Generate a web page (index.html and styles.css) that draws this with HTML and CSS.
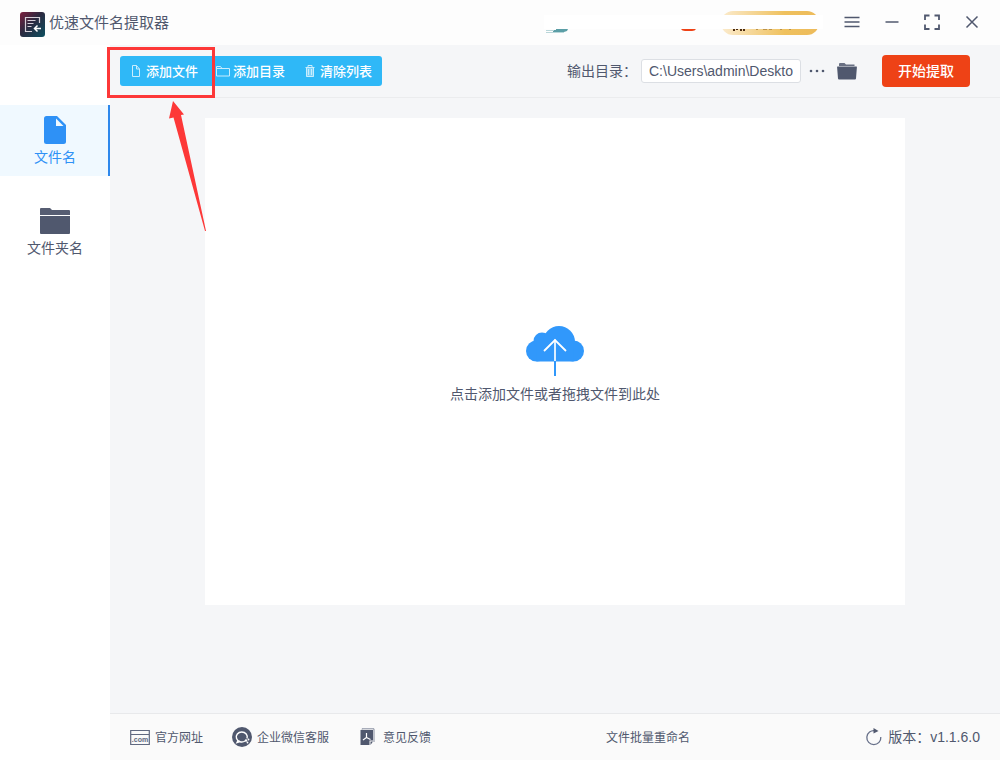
FILE: index.html
```html
<!DOCTYPE html>
<html lang="zh-CN">
<head>
<meta charset="utf-8">
<title>优速文件名提取器</title>
<link rel="stylesheet" href="styles.css">
</head>
<body>
<div class="app">
  <header class="titlebar">
    <svg class="logo" width="25" height="25" viewBox="0 0 25 25" aria-hidden="true">
      <defs>
        <linearGradient id="logo-fill" x1="0" y1="0" x2="1" y2="1">
          <stop offset="0" stop-color="#7d1f3d"/><stop offset=".45" stop-color="#2b2940"/><stop offset="1" stop-color="#0d5060"/>
        </linearGradient>
      </defs>
      <rect width="25" height="25" rx="3" fill="url(#logo-fill)"/>
      <path d="M19.500 11V5.500h-14v14H12M7.500 8.500h8M7.500 11.500h6M7.500 14.500h4" fill="none" stroke="#d5cfd8" stroke-width="1.200"/>
      <path d="M21 16.500h-6M17.500 13.500l-3 3 3 3" fill="none" stroke="#fff" stroke-width="1.500"/>
    </svg>
    <h1 class="title">优速文件名提取器</h1>
    <svg class="account" width="280" height="28" viewBox="0 0 280 28" aria-hidden="true">
      <defs>
        <linearGradient id="gold" x1="0" x2="1">
          <stop offset="0" stop-color="#fbebcd"/><stop offset=".65" stop-color="#efc15e"/><stop offset="1" stop-color="#edbb5b"/>
        </linearGradient>
      </defs>
      <path d="M12 20h12l-1 2-3 1H9v-2h3z" fill="#5b9ea6"/>
      <path d="M2 21h8v1H2zM2 23h18v1H2z" fill="#b9d6d9"/>
      <path d="M137 20h15q-1 2-4 2h-7q-3 0-4-2z" fill="#ee4216"/>
      <rect x="177" y="2" width="98" height="24" rx="12" fill="url(#gold)"/>
      <path d="M189 20h2v2h-2zM196 20h2v2h-2zM199 20h2v2h-2zM192 20h2v1h-2z" fill="#4b2b12"/>
      <path d="M212 20h2v1h-2zM219 20h4v1h-4zM225 20h3v1h-3zM236 20h2v1h-2zM245 20h2v1h-2z" fill="#bd9349"/>
      <path d="M0 6h279v14H0z" fill="#fff"/>
    </svg>
    <nav class="window-controls" aria-label="窗口">
      <button class="win-btn" type="button" aria-label="菜单"><svg width="18" height="18" viewBox="0 0 18 18"><path d="M1.500 3.500h15M1.500 8h15M1.500 12.500h15" stroke-width="1.500"/></svg></button>
      <button class="win-btn" type="button" aria-label="最小化"><svg width="18" height="18" viewBox="0 0 18 18"><path d="M2.500 8h13" stroke-width="1.500"/></svg></button>
      <button class="win-btn" type="button" aria-label="最大化"><svg width="18" height="18" viewBox="0 0 18 18"><path d="M2 6V1.500h4.500M11.500 1.500H16V6M16 10.500V15h-4.500M6.500 15H2v-4.500" stroke-width="1.800"/></svg></button>
      <button class="win-btn" type="button" aria-label="关闭"><svg width="18" height="18" viewBox="0 0 18 18"><path d="M3.500 2.500l11 11M14.500 2.500l-11 11" stroke-width="1.500"/></svg></button>
    </nav>
  </header>

  <div class="body">
    <nav class="sidebar">
      <button class="side-item active" type="button">
        <svg width="30" height="30" viewBox="0 0 30 30" aria-hidden="true"><path d="M6.500 1H17l9 9v16.500q0 2.500-2.500 2.500h-17Q4 29 4 26.500V3.500Q4 1 6.500 1z" fill="#2e91f6"/><path d="M16 3.500V11h7.500z" fill="#f0f9ff"/></svg>
        <span>文件名</span>
      </button>
      <button class="side-item" type="button">
        <svg width="30" height="30" viewBox="0 0 30 30" aria-hidden="true"><path d="M1 2h9l2 2h17q1 0 1 1v4H0V3q0-1 1-1z" fill="#565d72"/><path d="M0 10h30v17q0 1-1 1H1q-1 0-1-1z" fill="#50586e"/></svg>
        <span>文件夹名</span>
      </button>
    </nav>

    <main class="main">
      <div class="toolbar">
        <div class="actions">
          <button class="action" type="button">
            <svg width="14" height="14" viewBox="0 0 14 14" aria-hidden="true"><path d="M3.500 1.500h4l3 3.500v7.500h-7zM7.500 1.500V5h3"/></svg><span>添加文件</span>
          </button>
          <button class="action" type="button">
            <svg width="14" height="14" viewBox="0 0 14 14" aria-hidden="true"><path d="M.500 12V2.500h4l1.500 2h7.500V12zM.500 4.500H6"/></svg><span>添加目录</span>
          </button>
          <button class="action" type="button">
            <svg width="14" height="14" viewBox="0 0 14 14" aria-hidden="true"><path d="M3.500 4.500h7v8h-7z" opacity=".5" class="bin"/><path d="M2.500 3.500h9M5 3V1.500h4V3M3.500 4v8.500h7V4M5.500 5v6M8.500 5v6"/></svg><span>清除列表</span>
          </button>
        </div>
        <div class="output">
          <label class="output-label" for="out">输出目录：</label>
          <input class="output-path" id="out" type="text" value="C:\Users\admin\Deskto">
          <button class="icon-btn more" type="button" aria-label="更多"><svg width="16" height="20" viewBox="0 0 16 20"><circle cx="2" cy="10" r="1.300"/><circle cx="8" cy="10" r="1.300"/><circle cx="14" cy="10" r="1.300"/></svg></button>
          <button class="icon-btn folder" type="button" aria-label="打开目录"><svg width="20" height="20" viewBox="0 0 20 20"><path d="M2 5V3q0-1 1-1h4.500L9 3.500h8.500V5z" opacity=".85"/><path d="M.500 5.500h19q.500 0 .400.800L19 17.500q-.100 1-1 1H2q-.900 0-1-1L.100 6.300Q0 5.500.500 5.500z"/></svg></button>
          <button class="start" type="button">开始提取</button>
        </div>
      </div>

      <section class="workspace">
        <button class="dropzone" type="button">
          <svg width="58" height="52" viewBox="0 0 58 52" aria-hidden="true">
            <g fill="#3198fb">
              <circle cx="10.500" cy="26" r="10.500"/>
              <circle cx="16" cy="16" r="8.500"/>
              <circle cx="33" cy="17" r="16"/>
              <circle cx="47.500" cy="26" r="10.500"/>
              <path d="M10.500 16h37v20.500h-37zM28 36h2v15h-2z"/>
            </g>
            <path d="M29 14.500V36" stroke="#dceeff" stroke-width="2"/>
            <path d="M18 26l11-11 11 11" fill="none" stroke="#fff" stroke-width="1.800"/>
          </svg>
          <span>点击添加文件或者拖拽文件到此处</span>
        </button>
      </section>

      <footer class="footer">
        <div class="links">
          <a class="link" href="#">
            <svg width="20" height="20" viewBox="0 0 20 20" aria-hidden="true"><path d="M.700 3.500h18.600v14H.700zM1 7.500h18" fill="none" stroke="#606980" stroke-width="1.200"/><text class="com" x="10" y="15">.com</text></svg>
            <span>官方网址</span>
          </a>
          <a class="link" href="#">
            <svg width="20" height="20" viewBox="0 0 20 20" aria-hidden="true"><circle cx="10" cy="10" r="10" fill="#50586e"/><path d="M13 14a5.500 5 0 1 1 2-2.500M6 13.500L5 15.500l3-1" fill="none" stroke="#fff" stroke-width="1.400"/><circle cx="14" cy="13.500" r="1.200" fill="#fff"/><circle cx="16.500" cy="12.500" r=".900" fill="#fff"/><circle cx="15.500" cy="15.500" r=".900" fill="#fff"/></svg>
            <span>企业微信客服</span>
          </a>
          <a class="link" href="#">
            <svg width="20" height="20" viewBox="-2 0 20 20" aria-hidden="true"><path d="M2 2.500V1.800h12V15" fill="none" stroke="#858c9e" stroke-width="1"/><path d="M.500 3h12.500v10.500H9.500V18h-9z" fill="#50586e"/><path d="M10.500 14.500H13L10.500 18z" fill="#50586e"/><path d="M6.500 6v4.500L3 13M6.500 10.500l4 2" fill="none" stroke="#fff" stroke-width="1.200"/></svg>
            <span>意见反馈</span>
          </a>
        </div>
        <a class="rename" href="#">文件批量重命名</a>
        <div class="version">
          <svg width="18" height="18" viewBox="0 0 18 18" aria-hidden="true"><path d="M10 2.700A7 7 0 1 0 15.800 9" fill="none" stroke="#68718a" stroke-width="1.300"/><path d="M8.500 0l5 3-5 2.500z" fill="#50586e"/></svg>
          <span>版本：v1.1.6.0</span>
        </div>
      </footer>
    </main>
  </div>

  <svg class="callout" width="108" height="185" viewBox="0 0 108 185" aria-hidden="true">
    <path d="M1.500 1.500h105v48H1.500z" fill="none" stroke="#fd3838" stroke-width="3"/>
    <path d="M66 54l11 13.500-3 .500L99 184h-1L66.500 70.500l-4.500 1z" fill="#fd3838"/>
  </svg>
</div>
</body>
</html>
```
FILE: styles.css
```css
* { box-sizing: border-box; }

body {
  margin: 0;
  font-family: "Liberation Sans", "Noto Sans CJK SC", sans-serif;
  font-size: 14px;
  color: #50586e;
}

button, input {
  margin: 0;
  padding: 0;
  border: 0;
  background: none;
  font: inherit;
  color: inherit;
}

button { cursor: pointer; }
a { color: inherit; text-decoration: none; }
svg { display: block; flex: none; }

.app {
  position: relative;
  display: flex;
  flex-direction: column;
  min-height: 100vh;
}

.titlebar {
  display: flex;
  align-items: center;
  height: 45px;
  padding: 0 16px 0 20px;
  background: #fdfdfd;
}

.logo { margin-top: 4px; }

.title {
  margin: 0 auto 0 4px;
  padding-bottom: 2px;
  font-size: 15px;
  font-weight: 400;
}

.account { margin-right: 16px; }

.window-controls { display: flex; gap: 16px; }

.win-btn {
  display: grid;
  place-items: center;
  width: 24px;
  height: 24px;
}

.win-btn path { fill: none; stroke: #50586e; }

.body { display: flex; flex: 1; }

.sidebar {
  display: flex;
  flex-direction: column;
  flex: none;
  gap: 20px;
  width: 110px;
  padding-top: 60px;
  background: #fff;
}

.side-item {
  display: flex;
  flex-direction: column;
  align-items: center;
  gap: 2px;
  height: 71px;
  padding: 10px 0 0;
  line-height: 20px;
}

.side-item.active {
  background: #f0f9ff;
  color: #2e91f6;
  box-shadow: inset -2px 0 #2e88ec;
}

.main {
  display: flex;
  flex: 1;
  flex-direction: column;
  min-width: 0;
  background: #f5f6f8;
}

.toolbar {
  display: flex;
  align-items: center;
  justify-content: space-between;
  height: 53px;
  padding: 0 30px 0 10px;
  border-bottom: 1px solid #ebecee;
}

.actions {
  display: flex;
  padding-right: 1px;
  border-radius: 3px;
  background: #2fb8f7;
}

.action {
  display: flex;
  align-items: center;
  gap: 3px;
  width: 87px;
  height: 30px;
  padding-left: 9px;
  font-size: 13px;
  font-weight: 500;
  color: #fff;
}

.action span { padding-bottom: 2px; }
.action path { fill: none; stroke: #c9edfd; }
.action .bin { fill: #c9edfd; }

.output { display: flex; align-items: center; }
.output-label { margin-right: 4px; padding-bottom: 3px; }

.output-path {
  width: 160px;
  height: 24px;
  padding: 0 7px;
  border: 1px solid #dcdfe4;
  border-radius: 3px;
  background: #fff;
}

.icon-btn { fill: #50586e; }
.more { margin-left: 8px; }
.folder { margin-left: 12px; }

.start {
  width: 88px;
  height: 32px;
  margin-left: 25px;
  padding-bottom: 2px;
  border-radius: 4px;
  background: #ee4216;
  font-weight: 500;
  color: #fff;
}

.workspace {
  display: flex;
  flex: 1;
  padding: 20px 95px 108px;
}

.dropzone {
  display: flex;
  flex: 1;
  flex-direction: column;
  align-items: center;
  justify-content: center;
  gap: 7px;
  padding-top: 6px;
  background: #fff;
  line-height: 20px;
}

.footer {
  display: flex;
  align-items: center;
  justify-content: space-between;
  height: 47px;
  padding: 0 20px;
  border-top: 1px solid #e8e9eb;
  background: #fafafa;
  font-size: 12px;
  white-space: nowrap;
}

.links { display: flex; gap: 29px; }
.link { display: flex; align-items: center; gap: 5px; }

.link span,
.rename,
.version span { padding-bottom: 2px; }

.com {
  font-size: 7px;
  font-weight: 700;
  text-anchor: middle;
  fill: #606980;
}

.version {
  display: flex;
  align-items: center;
  gap: 5px;
  font-size: 14px;
}

.callout {
  position: absolute;
  top: 47px;
  left: 107px;
  pointer-events: none;
}
```
